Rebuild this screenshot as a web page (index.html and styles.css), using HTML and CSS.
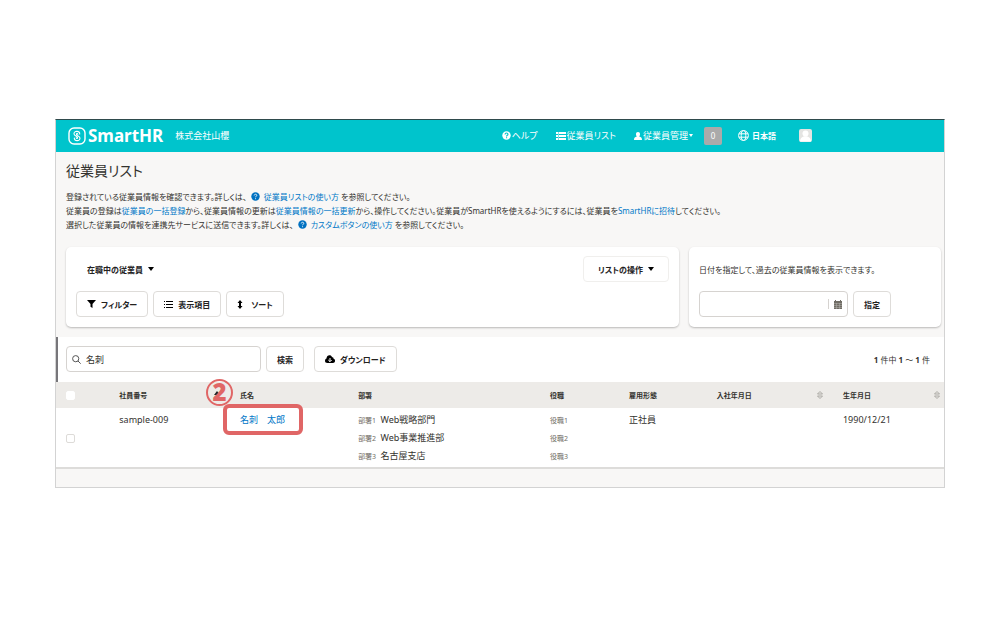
FILE: index.html
```html
<!DOCTYPE html>
<html lang="ja">
<head>
    <meta charset="UTF-8">
    <meta name="viewport" content="width=device-width, initial-scale=1.0">
    <title>従業員リスト | SmartHR</title>
    <link rel="stylesheet" href="styles.css">
</head>
<body>
    <div class="app">
        <header class="header">
            <a class="logo" href="#">
                <svg width="18" height="18" viewBox="0 0 18 18" fill="none" stroke="#fff">
                    <rect x="1" y="1" width="16" height="16" rx="5" stroke-width="1.4"/>
                    <path d="M11.700 7C12 3.500 6 3.500 6 6.700c0 2.600 3.600 1.800 3.600 4 0 1-1.300 1-1.400 0" stroke-width="1.100" stroke-linecap="round"/>
                    <path d="M6.300 11c-.3 3.500 5.700 3.500 5.700.3 0-2.600-3.600-1.800-3.600-4 0-1 1.300-1 1.400 0" stroke-width="1.100" stroke-linecap="round"/>
                </svg>
                <span>SmartHR</span>
            </a>
            <span class="company">株式会社山櫻</span>
            <nav class="nav">
                <a href="#">
                    <svg width="9" height="9" viewBox="0 0 16 16"><circle cx="8" cy="8" r="7.5" fill="#fff"/><path d="M5.4 6.2C5.5 2.6 10.8 3 10.6 6c-.1 1.6-2.5 1.6-2.5 3.6M8.1 11v2" fill="none" stroke="#00c4cc" stroke-width="2"/></svg>
                    ヘルプ
                </a>
                <a href="#">
                    <svg width="10" height="8" viewBox="0 0 10 8" fill="#fff"><path d="M0 0h2v2H0zM3 0h7v2H3zM0 3h2v2H0zM3 3h7v2H3zM0 6h2v2H0zM3 6h7v2H3z"/><path d="M2 0h1v8H2z" opacity=".5"/></svg>
                    従業員リスト
                </a>
                <a href="#">
                    <svg width="8" height="8" viewBox="0 0 8 8" fill="#fff"><path d="M4 0a2 2 0 0 1 2 2.2C6 3.4 5.500 4 5.200 4.400 7 5 8 5.500 8 8H0c0-2.500 1-3 2.800-3.600C2.500 4 2 3.400 2 2.200A2 2 0 0 1 4 0z"/></svg>
                    従業員管理
                    <svg width="4" height="3" viewBox="0 0 4 3" fill="#fff"><path d="M0 0h4L2 3z"/></svg>
                </a>
                <span class="badge">0</span>
                <button class="lang" type="button">
                    <svg width="11" height="11" viewBox="0 0 11 11" fill="none" stroke="#fff"><circle cx="5.500" cy="5.500" r="4.900"/><ellipse cx="5.500" cy="5.500" rx="2.300" ry="4.900"/><path d="M1 3.800h9M1 7.200h9"/></svg>
                    日本語
                </button>
                <button class="avatar" type="button" aria-label="アカウント">
                    <svg width="13" height="13" viewBox="0 0 13 13"><rect width="13" height="13" rx="2" fill="#e4e4e2"/><circle cx="6.500" cy="4.500" r="3" fill="#fff"/><path d="M1 12.500c0-7 11-7 11 0z" fill="#fff"/></svg>
                </button>
            </nav>
        </header>

        <main>
            <div class="intro">
                <h1>従業員リスト</h1>
                <p>登録されている従業員情報を確認できます。詳しくは、<a href="#"><svg class="help" width="9" height="9" viewBox="0 0 16 16"><circle cx="8" cy="8" r="7.500" fill="#0071c1"/><path d="M5.700 6.200C5.800 3.200 10.400 3.500 10.300 6c-.1 1.500-2.200 1.500-2.200 3.400M8.100 11v1.800" fill="none" stroke="#fff" stroke-width="1.500"/></svg>従業員リストの使い方</a> を参照してください。</p>
                <p>従業員の登録は<a href="#">従業員の一括登録</a>から、従業員情報の更新は<a href="#">従業員情報の一括更新</a>から、操作してください。従業員がSmartHRを使えるようにするには、従業員を<a href="#">SmartHRに招待</a>してください。</p>
                <p>選択した従業員の情報を連携先サービスに送信できます。詳しくは、<a href="#"><svg class="help" width="9" height="9" viewBox="0 0 16 16"><circle cx="8" cy="8" r="7.500" fill="#0071c1"/><path d="M5.700 6.200C5.800 3.200 10.400 3.500 10.300 6c-.1 1.500-2.200 1.500-2.200 3.400M8.100 11v1.800" fill="none" stroke="#fff" stroke-width="1.500"/></svg>カスタムボタンの使い方</a> を参照してください。</p>
            </div>

            <div class="cards">
                <section class="card">
                    <div class="row between">
                        <button class="btn plain" type="button">在職中の従業員 <svg width="6" height="4" viewBox="0 0 6 4"><path d="M0 0h6L3 4z"/></svg></button>
                        <button class="btn light" type="button">リストの操作 <svg width="6" height="4" viewBox="0 0 6 4"><path d="M0 0h6L3 4z"/></svg></button>
                    </div>
                    <div class="row">
                        <button class="btn" type="button"><svg width="9" height="8" viewBox="0 0 9 8"><path d="M0 0h9L5.500 4v4l-2-1.300V4z"/></svg> フィルター</button>
                        <button class="btn" type="button"><svg width="9" height="9" viewBox="0 0 9 9"><path d="M0 1h1v1H0zM0 4h1v1H0zM0 7h1v1H0zM2 1h7v1H2zM2 4h7v1H2zM2 7h7v1H2z"/></svg> 表示項目</button>
                        <button class="btn" type="button"><svg class="sort-icon" width="6" height="9" viewBox="0 0 6 9"><path d="M3 0l2.500 3H4v3h1.500L3 9 .5 6H2V3H.5z"/></svg> ソート</button>
                    </div>
                </section>
                <section class="card">
                    <div class="row"><label for="date">日付を指定して、過去の従業員情報を表示できます。</label></div>
                    <div class="row">
                        <div class="field date">
                            <input type="text" id="date">
                            <svg width="8" height="9" viewBox="0 0 8 9" fill="#706d65"><path d="M0 1h1V0h1v1h4V0h1v1h1v8H0z"/><path d="M0 3.500h8M0 5.500h8M0 7.500h8M2.500 3v6M5.500 3v6" stroke="#b5b3ae" stroke-width=".5"/></svg>
                        </div>
                        <button class="btn" type="button">指定</button>
                    </div>
                </section>
            </div>

            <div class="toolbar">
                <div class="field search">
                    <svg width="9" height="9" viewBox="0 0 9 9" fill="none" stroke="#555"><circle cx="3.700" cy="3.700" r="3.100"/><path d="M6 6l2.700 2.700"/></svg>
                    <input type="text" value="名刺" aria-label="検索キーワード">
                </div>
                <button class="btn" type="button">検索</button>
                <button class="btn download" type="button"><svg width="10" height="8" viewBox="0 0 10 8"><path d="M2.500 8C.8 8 0 7 0 5.700c0-1 .7-1.800 1.500-2.100C1.500-.4 6.200-.8 7 2.200c1.200 0 1.700.7 1.500 1.600C11 4.500 10.200 8 8 8z"/><path d="M5 3v3.500M3.300 5L5 6.700 6.700 5" fill="none" stroke="#fff"/></svg> ダウンロード</button>
                <span class="count"><b>1</b> 件中 <b>1</b> ～ <b>1</b> 件</span>
            </div>

            <table class="list">
                <colgroup>
                    <col class="c-check"><col class="c-no"><col class="c-name"><col class="c-dept">
                    <col class="c-role"><col class="c-type"><col class="c-join"><col class="c-birth">
                </colgroup>
                <thead>
                    <tr>
                        <th><input type="checkbox" aria-label="すべて選択"></th>
                        <th><div class="th">社員番号 <svg width="6" height="9" viewBox="0 0 6 9"><path d="M0 4l3-4 3 4z" fill="#23221e"/><path d="M0 5h6L3 9z" fill="#c9c7c2"/></svg></div></th>
                        <th>氏名</th>
                        <th>部署</th>
                        <th>役職</th>
                        <th>雇用形態</th>
                        <th><div class="th">入社年月日 <svg width="6" height="8" viewBox="0 0 6 8" fill="none" stroke="#aaa8a3"><path d="M.5 3L3 .5 5.500 3zM.5 5L3 7.500 5.500 5z"/></svg></div></th>
                        <th><div class="th last">生年月日 <svg width="6" height="8" viewBox="0 0 6 8" fill="none" stroke="#aaa8a3"><path d="M.5 3L3 .5 5.500 3zM.5 5L3 7.500 5.500 5z"/></svg></div></th>
                    </tr>
                </thead>
                <tbody>
                    <tr>
                        <td class="check"><input type="checkbox" aria-label="名刺　太郎を選択"></td>
                        <td>sample-009</td>
                        <td class="name">
                            <a href="#">名刺　太郎</a>
                            <span class="marker"></span>
                            <span class="step">2</span>
                        </td>
                        <td>
                            <div><small>部署1</small> Web戦略部門</div>
                            <div><small>部署2</small> Web事業推進部</div>
                            <div><small>部署3</small> 名古屋支店</div>
                        </td>
                        <td>
                            <div><small>役職1</small></div>
                            <div><small>役職2</small></div>
                            <div><small>役職3</small></div>
                        </td>
                        <td>正社員</td>
                        <td></td>
                        <td>1990/12/21</td>
                    </tr>
                </tbody>
            </table>
        </main>
    </div>
</body>
</html>
```
FILE: styles.css
```css
* {
    box-sizing: border-box;
}
body {
    margin: 0;
    background-color: #fff;
    color: #33322e;
    font-family: "Noto Sans", "Noto Sans CJK JP", sans-serif;
    font-size: 9px;
    font-feature-settings: "palt";
}
a {
    color: #0077c7;
    text-decoration: none;
}
button,
input {
    font: inherit;
    font-feature-settings: inherit;
    color: inherit;
}
svg {
    flex: none;
}
.app {
    margin: 119px 55px;
    padding-bottom: 18px;
    background-color: #f8f7f6;
    border: 1px solid #d3d3d3;
    border-top: 1px solid #2f4a4c;
}

/* ヘッダー */
.header {
    display: flex;
    align-items: center;
    height: 32px;
    padding: 0 132px 1px 12px;
    background-color: #00c4cc;
    color: #fff;
}
.logo {
    display: flex;
    align-items: center;
    gap: 2px;
    color: #fff;
    font-size: 17px;
    font-weight: bold;
}
.company {
    margin-left: 12px;
}
.nav {
    display: flex;
    align-items: center;
    margin-left: auto;
}
.nav a {
    display: flex;
    align-items: center;
    gap: 1px;
    margin-right: 18px;
    color: #fff;
}
.nav a:nth-child(3) {
    margin-right: 11px;
}
.badge {
    width: 18px;
    line-height: 18px;
    border-radius: 2px;
    background-color: #aaa;
    font-size: 8px;
    text-align: center;
}
.lang,
.avatar {
    display: flex;
    align-items: center;
    gap: 3px;
    padding: 0;
    border: 0;
    background: none;
    font-size: 8px;
    font-weight: bold;
}
.lang {
    margin: 0 23px 0 16px;
}

/* 見出しと説明 */
.intro {
    padding: 9px 10px 15px;
    font-size: 8px;
}
h1 {
    margin: 0 0 9px;
    font-size: 14px;
    font-weight: normal;
    line-height: 20px;
}
.intro p {
    margin: 0;
    line-height: 14px;
}
.help {
    margin: 0 4px;
    vertical-align: -1px;
}

/* カード */
.cards {
    display: grid;
    grid-template-columns: 1fr 252px;
    gap: 10px;
    padding: 0 3px 10px 10px;
}
.card {
    display: flex;
    flex-direction: column;
    gap: 9px;
    padding: 9px 10px 10px;
    border-radius: 5px;
    background-color: #fff;
    box-shadow: 0 1px 2px rgba(0, 0, 0, 0.25);
    font-size: 8px;
}
.row {
    display: flex;
    align-items: center;
    gap: 5px;
    min-height: 26px;
}
.between {
    justify-content: space-between;
}
.btn {
    display: flex;
    align-items: center;
    gap: 5px;
    height: 26px;
    padding: 0 10px;
    border: 1px solid #dedcd9;
    border-radius: 4px;
    background-color: #fff;
    color: #23221e;
    font-size: 8px;
    font-weight: bold;
    white-space: nowrap;
}
.btn.plain {
    border-color: transparent;
}
.btn.light {
    border-color: #f0efed;
    padding: 0 14px;
}
.sort-icon {
    margin-right: 3px;
}
.field {
    display: flex;
    align-items: center;
    height: 26px;
    padding: 0 5px;
    border: 1px solid #d6d3d0;
    border-radius: 4px;
    background-color: #fff;
}
.field input {
    flex: 1;
    min-width: 0;
    padding: 0 5px;
    border: 0;
    outline: 0;
    background: none;
}
.date {
    width: 149px;
}
.date input {
    height: 10px;
    margin-right: 5px;
    border-right: 1px solid #d6d3d0;
}

/* 検索バー */
.toolbar {
    display: flex;
    align-items: center;
    gap: 5px;
    padding: 9px 14px 10px 8px;
    border-left: 2px solid #77767a;
    background-color: #fff;
}
.search {
    width: 195px;
}
.download {
    margin-left: 5px;
}
.count {
    margin-left: auto;
    font-size: 8px;
}

/* 従業員テーブル */
.list {
    width: 100%;
    table-layout: fixed;
    border-collapse: collapse;
    background-color: #fff;
    border-bottom: 2px solid #dddcda;
}
.c-check { width: 6%; }
.c-no { width: 13.6%; }
.c-name { width: 13.3%; }
.c-dept { width: 21.6%; }
.c-role { width: 8.9%; }
.c-type { width: 9.9%; }
.c-join { width: 14.2%; }
.list th {
    height: 26px;
    padding: 0 10px;
    background-color: #edebe8;
    font-size: 7px;
    text-align: left;
}
.th {
    display: flex;
    align-items: center;
    justify-content: space-between;
}
.list .last {
    margin-right: -6px;
}
.list td {
    padding: 3px 10px 2px;
    line-height: 18px;
    vertical-align: top;
}
.list td div {
    height: 18px;
}
.list .check {
    vertical-align: middle;
}
.list small {
    margin-right: 2px;
    color: #706d65;
    font-size: 7px;
    line-height: 1;
}
.list input {
    display: block;
    appearance: none;
    width: 9px;
    height: 9px;
    margin: 0;
    border: 1px solid #dddbd8;
    border-radius: 2px;
    background-color: #fff;
}
.list th input {
    border-color: #fff;
}

/* 手順の目印 */
.name {
    position: relative;
}
.marker {
    position: absolute;
    top: -4px;
    left: -7px;
    width: 80px;
    height: 31px;
    border: 4px solid #e06666;
    border-radius: 6px;
    pointer-events: none;
}
.step {
    position: absolute;
    top: -29px;
    left: -24px;
    width: 27px;
    height: 27px;
    border: 2px solid #e06666;
    border-radius: 50%;
    color: #e06666;
    font-size: 24px;
    font-weight: 900;
    line-height: 22px;
    text-align: center;
}
```
